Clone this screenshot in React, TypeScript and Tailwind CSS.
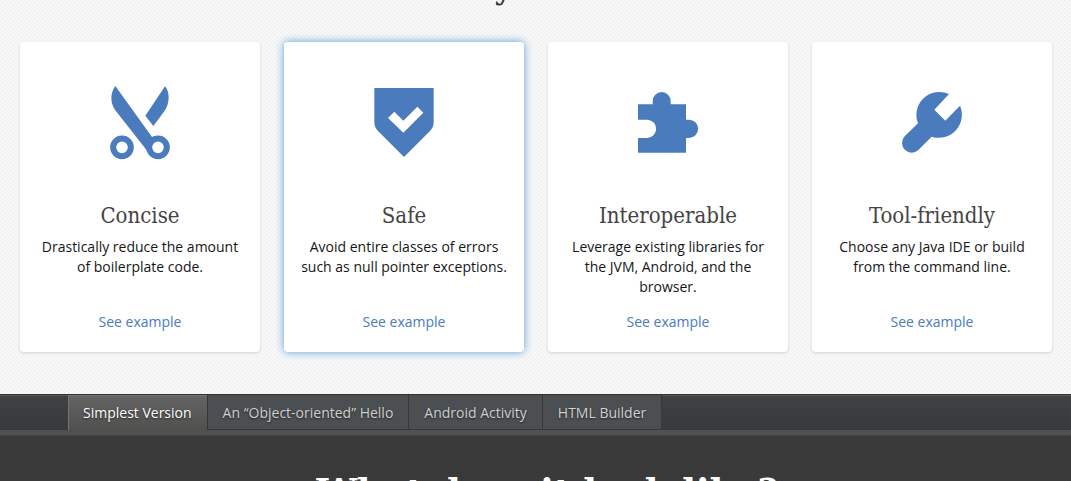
import type { ReactNode } from "react";

type Feature = {
  title: string;
  text: string;
  icon: ReactNode;
  highlighted?: boolean;
};

const features: Feature[] = [
  {
    title: "Concise",
    text: "Drastically reduce the amount of boilerplate code.",
    icon: (
      <>
        <path d="M76 48C62 66 58 98 77 122L172 243L180 222L194 208L186 201Z" />
        <path d="M225 49C240 66 240 100 223 124L190 168L166 137Z" />
        <circle cx="96" cy="232" r="26.5" fill="none" stroke="#4a7bbd" strokeWidth="18" />
        <circle cx="204" cy="232" r="26.5" fill="none" stroke="#4a7bbd" strokeWidth="18" />
      </>
    ),
  },
  {
    title: "Safe",
    text: "Avoid entire classes of errors such as null pointer exceptions.",
    highlighted: true,
    icon: (
      <path
        fillRule="evenodd"
        d="M61 54H239V156Q239 172 228 183L150 261L72 183Q61 172 61 156ZM102 144L148 188L208 128L190 110L148 152L121 125Z"
      />
    ),
  },
  {
    title: "Interoperable",
    text: "Leverage existing libraries for the JVM, Android, and the browser.",
    icon: (
      <path d="M60 103H104V93A27 27 0 0 1 158 93V103H204V149H213A27 27 0 0 1 213 204H204V248H60V204H87A27 27 0 0 0 87 149H60Z" />
    ),
  },
  {
    title: "Tool-friendly",
    text: "Choose any Java IDE or build from the command line.",
    icon: (
      <path d="M201 72L157 119L190 152L234 107A69 69 0 0 1 149 200L109 240A29 29 0 0 1 68 199L108 160A69 69 0 0 1 201 72Z" />
    ),
  },
];

const tabs = ["Simplest Version", "An “Object-oriented” Hello", "Android Activity", "HTML Builder"];

function FeatureCard({ title, text, icon, highlighted }: Feature) {
  return (
    <article
      className={`flex min-h-[310px] flex-col items-center rounded bg-white px-5 pt-7 pb-5 text-center ${
        highlighted ? "shadow-[0_0_8px_#5b9dd9]" : "shadow-[0_1px_3px_rgba(0,0,0,0.15)]"
      }`}
    >
      <svg viewBox="0 0 300 300" className="size-[100px] fill-[#4a7bbd]" aria-hidden="true">
        {icon}
      </svg>
      <h3 className="mt-8 font-['DejaVu_Serif_Condensed','DejaVu_Serif',serif] text-[22px] leading-7 text-[#444]">
        {title}
      </h3>
      <p className="-mx-1 mt-[7px] text-sm leading-5 text-[#161616]">{text}</p>
      <a href="#example" className="mt-auto text-sm leading-5 text-[#4a7bbd]">
        See example
      </a>
    </article>
  );
}

export default function App() {
  return (
    <div className="flex h-screen flex-col overflow-hidden font-['Open_Sans',sans-serif]">
      <section className="bg-[#fafafa] bg-[linear-gradient(135deg,#f1f1f1_25%,#fafafa_25%,#fafafa_50%,#f1f1f1_50%,#f1f1f1_75%,#fafafa_75%)] bg-[length:4px_4px] pb-[42px]">
        <div className="flex h-[42px] items-end justify-center overflow-hidden pb-9">
          <h1 className="pl-2 font-['DejaVu_Serif_Condensed','DejaVu_Serif',serif] text-4xl leading-10 text-[#333]">
            Why Kotlin?
          </h1>
        </div>
        <div className="grid grid-cols-4 gap-6 pr-[19px] pl-5">
          {features.map((feature) => (
            <FeatureCard key={feature.title} {...feature} />
          ))}
        </div>
      </section>

      <div
        role="tablist"
        className="flex h-9 shrink-0 border-t border-[#303132] bg-linear-to-b from-[#404143] to-[#38393b] pl-17 text-sm shadow-[inset_0_1px_0_#5a5a5a]"
      >
        {tabs.map((tab, index) => (
          <button
            key={tab}
            type="button"
            role="tab"
            aria-selected={index === 0}
            className={`border-r px-[15px] text-shadow-[0_1px_2px_rgba(0,0,0,0.6)] ${
              index === 0
                ? "border-[#343536] bg-linear-to-b from-[#646464] to-[#50504f] text-white shadow-[inset_1px_1px_0_#747474]"
                : "border-[#35383a] bg-[#4b4f52] text-[#d0d0d0] shadow-[inset_0_-1px_0_#35383a]"
            }`}
          >
            {tab}
          </button>
        ))}
      </div>
      <section className="min-h-0 grow border-t-5 border-[#50504e] bg-[#3a3a3a] bg-[radial-gradient(#383838_25%,transparent_26%)] bg-[length:4px_4px] pt-[34px] pl-6 text-center shadow-[inset_0_1px_0_#444546]">
        <h2 className="font-['DejaVu_Serif_Condensed','DejaVu_Serif',serif] text-[40px] leading-12 font-bold whitespace-nowrap text-white">
          What does it look like?
        </h2>
      </section>
    </div>
  );
}
